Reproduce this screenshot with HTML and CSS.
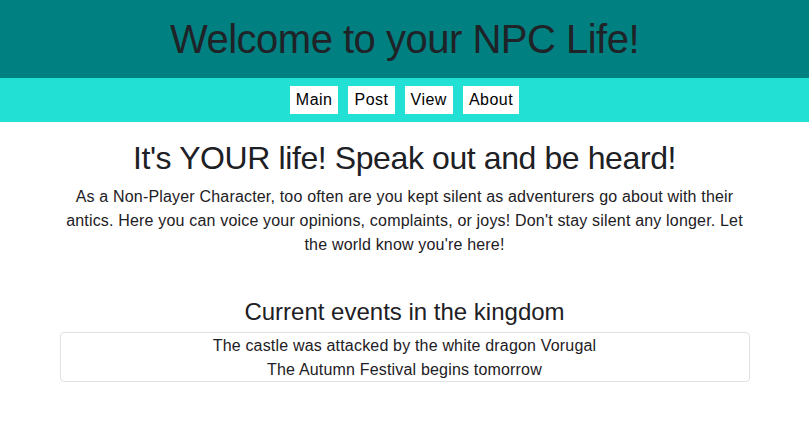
FILE: index.html
```html
<!DOCTYPE html>
<html lang="en">
<head>
<meta charset="utf-8">
<title>NPC Life</title>
<link rel="stylesheet" href="styles.css">
</head>
<body>
<header class="masthead">
  <h1 class="site-title">Welcome to your NPC Life!</h1>
</header>
<nav class="navbar">
  <a class="nav-btn" href="#">Main</a>
  <a class="nav-btn" href="#">Post</a>
  <a class="nav-btn" href="#">View</a>
  <a class="nav-btn" href="#">About</a>
</nav>
<main class="container">
  <h2 class="lead-title">It's YOUR life! Speak out and be heard!</h2>
  <p class="intro">As a Non-Player Character, too often are you kept silent as adventurers go about with their antics. Here you can voice your opinions, complaints, or joys! Don't stay silent any longer. Let the world know you're here!</p>
  <h3 class="events-title">Current events in the kingdom</h3>
  <div class="events">
    <div class="event">The castle was attacked by the white dragon Vorugal</div>
    <div class="event">The Autumn Festival begins tomorrow</div>
  </div>
</main>
</body>
</html>
```

FILE: styles.css
```css
* { box-sizing: border-box; }
html, body {
  margin: 0;
  padding: 0;
  background: #ffffff;
  color: #1d2024;
  font-family: "Liberation Sans", Arial, sans-serif;
  font-size: 16px;
  line-height: 1.5;
  letter-spacing: 0.18px;
}
.masthead {
  background: #008080;
  padding: 15px 0;
  text-align: center;
}
.site-title {
  margin: 0;
  font-size: 40px;
  font-weight: 400;
  line-height: 48px;
  letter-spacing: -0.5px;
  color: #1f2327;
}
.navbar {
  background: #22e1d4;
  padding: 8px 0;
  display: flex;
  justify-content: center;
  gap: 10px;
}
.nav-btn {
  display: block;
  background: #ffffff;
  color: #000000;
  text-decoration: none;
  padding: 2px 6px;
  line-height: 24px;
  font-size: 16px;
  letter-spacing: 0.5px;
}
.container {
  max-width: 720px;
  margin: 0 auto;
  padding: 17px 15px 0;
  text-align: center;
}
.lead-title {
  margin: 0 0 8px;
  font-size: 32px;
  font-weight: 400;
  line-height: 38px;
  letter-spacing: -0.4px;
}
.intro {
  margin: 0 0 40px;
  line-height: 24px;
}
.events-title {
  margin: 0 0 6px;
  font-size: 24px;
  font-weight: 400;
  line-height: 29px;
  letter-spacing: 0;
}
.events {
  border: 1px solid #dfe2e5;
  border-radius: 4px;
  padding-top: 1px;
}
.event {
  line-height: 23.5px;
}
```
